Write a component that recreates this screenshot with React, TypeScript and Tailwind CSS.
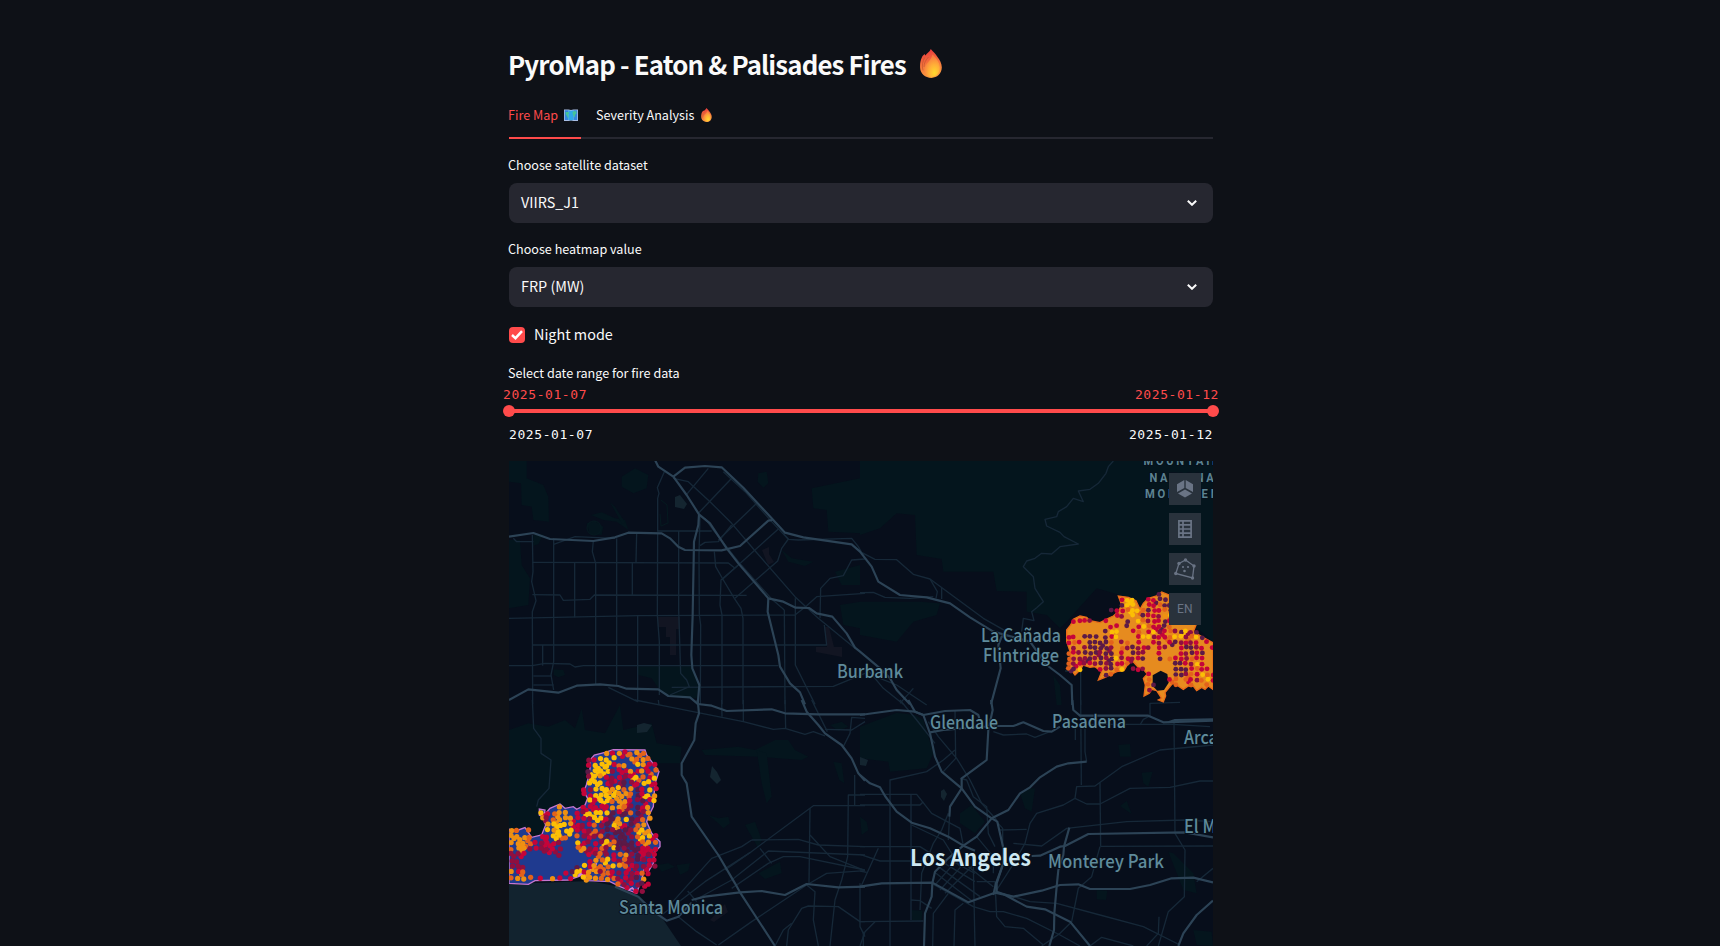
import React from "react";

const sans = "font-['Noto_Sans_CJK_SC',sans-serif]";

function Flame({ className, id }: { className: string; id: string }) {
  return (
    <svg viewBox="0 0 22 29" className={className}>
      <defs>
        <linearGradient id={id + "a"} x1="0.4" y1="0" x2="0.6" y2="1">
          <stop offset="0" stopColor="#e8383d" />
          <stop offset="0.45" stopColor="#f5703c" />
          <stop offset="1" stopColor="#fba040" />
        </linearGradient>
        <radialGradient id={id + "b"} cx="0.65" cy="0.82" r="0.75">
          <stop offset="0" stopColor="#ffd92e" />
          <stop offset="0.5" stopColor="#ffae38" />
          <stop offset="1" stopColor="#f97a40" />
        </radialGradient>
      </defs>
      <path d="M10.800 0C13 2.600 15.600 5 17.500 8 19.800 11.200 21.900 14.500 21.800 18.600 21.600 25 17 28.900 11.500 28.900 5 28.900.4 24.800.1 18.800-.1 15 .4 11.500 1.600 9c.7-1.600 1.500-2.800 3-4l.8 1.400C6.600 4.500 9.800 3 10.800 0Z" fill={`url(#${id}a)`} />
      <path d="M12.500 5.500c3.500 3.500 7.500 8 7.300 13.500-.2 5.400-3.800 8.900-8.300 8.900-4.600 0-7.300-3.400-7-7.600.3-5.500 6.500-8 8-14.800Z" fill={`url(#${id}b)`} />
      <path d="M4.600 8.500c-2 4-3 8-1.600 13M8.500 8c-2.800 3-4.500 6-4.500 10" fill="none" stroke="#b8512f" strokeWidth="0.9" opacity="0.65" />
    </svg>
  );
}

function MapEmoji() {
  return (
    <svg viewBox="0 0 14 12" className="h-3 w-3.5">
      <path d="M0 .5h4.500l2.500.5 2.500-.5H14V12H9.500L7 11.500 4.500 12H0Z" fill="#a9bfe6" />
      <path d="M.8 1.200h3.700V11H.8zM9.500 1.200h3.700V11H9.500z" fill="#3487dc" />
      <path d="M4.500 1.200 7 1.700v9.600l-2.500-.4zM9.500 1.200 7 1.700v9.600l2.500-.4z" fill="#2fa8e8" />
      <path d="M1.500 3h3l.8 1.500L4 5.500 4.700 7.500 4 9.500 3 7 1.800 5.500zM8.500 3l1.500-1 2.500.5-.3 2.500-1.200.8V8.500L9.800 7.500 8.700 5z" fill="#45c49a" />
    </svg>
  );
}

function Select({ label, value }: { label: string; value: string }) {
  return (
    <div className="flex flex-col">
      <div className="-mt-px -ml-px flex h-[29px] items-start text-[12.6px] leading-[21px]">{label}</div>
      <div className="flex h-10 items-center justify-between rounded-lg bg-[#262730] pr-4 pl-3 text-[14.4px]">
        <span className="pb-0.5 leading-6">{value}</span>
        <svg viewBox="0 0 10 6" className="h-1.5 w-2.5">
          <path d="M.8.8 5 4.800 9.200.8" fill="none" stroke="#fafafa" strokeWidth="2" />
        </svg>
      </div>
    </div>
  );
}

type Lines = string[];

const majorNW: Lines = [
  "12,245 85,234 135,252 265,258 330,247 370,233 470,235 495,250 520,275 540,285 650,286 705,273 790,197 803,195",
  "450,15 460,35 505,65 545,120 582,178 615,205 665,280 700,325 790,430 835,440 872,458 912,459 935,475 982,485 1025,535 1050,578 1065,590 1125,640 1155,670 1175,705 1215,748",
  "505,65 540,38 600,33 650,37 715,98 800,190 840,233 895,247 1040,268 1065,290 1100,335 1120,380 1185,420 1265,427 1335,445 1395,487 1465,530 1575,560 1625,630 1665,660 1700,690 1702,750",
  "582,178 580,210 567,260 563,480 559,600 562,640 583,690 578,748",
  "790,430 788,470 820,600 825,635 855,685 885,712 900,748",
  "12,735 70,703 160,713 215,692 285,688 340,693 365,701 460,703 490,723 555,727 580,748",
];
const minorNW: Lines = [
  "82,240 84,350 80,380 93,437 82,470 83,748",
  "146,250 146,620 138,660 146,705",
  "209,322 209,487",
  "265,258 262,290 272,325 272,690",
  "335,250 335,690",
  "395,235 393,322",
  "382,322 382,420",
  "398,480 398,740 310,697",
  "458,230 458,130 462,115 457,98 478,50",
  "458,235 457,480 463,560 463,720",
  "521,228 521,465 527,655 545,675 553,695 495,720",
  "585,180 582,300 583,480 587,510 586,748",
  "628,290 632,335 655,375 688,430 708,460 714,490 714,748",
  "700,330 648,375 645,450 651,480 651,748",
  "838,465 840,748",
  "871,430 871,630 930,748",
  "113,570 113,632",
  "82,322 670,324 690,340",
  "82,419 165,420 175,436 255,433 268,420 725,421",
  "12,490 400,482 870,480 905,452 935,425 1080,415",
  "82,570 965,570 958,510",
  "12,632 82,632 120,625 195,627 210,636 235,632 820,632",
  "500,697 985,694 1080,655",
  "85,663 140,663",
  "85,690 146,690",
  "25,250 35,260 85,260",
  "146,268 210,245 330,250",
  "505,70 550,80 615,140 680,205 748,285 870,425 940,490 1050,580",
  "545,118 610,40",
  "580,175 680,70",
  "640,255 755,145",
  "650,375 820,222",
  "690,430 818,318 830,280 850,252 835,235",
  "585,272 600,262 640,260 680,210",
  "600,190 625,225 700,320 800,432 838,465",
  "655,50 720,110 800,200 850,253 880,255 1040,250 1060,275 1080,310",
  "945,490 947,400 975,370 1015,362 1040,315 1080,312",
  "458,228 620,228",
];
const minorNE: Lines = [
  "760,18 745,35 738,55 715,85 690,103 655,108 670,140 640,130 620,155 595,170 590,185 555,193 560,213 600,232 612,245 655,267 600,275 575,297 545,295 525,310 500,318 490,335 505,350 520,365 525,400 550,440 530,458 515,470 522,497 490,490 485,530",
  "0,413 40,412 75,427 150,430 220,425",
  "0,290 45,313 110,314 160,358 210,372 370,490 440,530",
  "210,372 232,410 228,430",
  "245,398 245,432",
  "615,648 662,648 662,750",
  "20,640 70,700 130,748",
  "160,700 120,745",
  "60,670 110,690 200,750",
];
const majorSW: Lines = [
  "578,0 582,40 572,70 568,120 530,190 530,225 545,250 560,350 640,465 690,550 705,577 810,738",
  "890,0 905,35 940,75 960,100 1010,135 1040,175 1060,220 1080,242",
  "578,12 620,17 665,33 800,28 840,40 940,43 1080,43",
  "330,560 400,590 440,630 485,662 520,650 560,608",
  "560,600 600,590 705,577 770,573 840,585 905,552 1000,562 1080,560",
];
const minorSW: Lines = [
  "82,0 86,85 108,115 108,160 138,180 132,265 100,300 95,320",
  "390,0 500,22 715,65 805,88 840,85 900,103 925,95 960,108",
  "460,0 462,15",
  "840,0 842,85",
  "650,0 651,50",
  "715,0 715,65",
  "920,0 967,95",
  "1080,55 1040,52 1035,100 1015,140",
  "960,88 1040,90 1080,65",
  "1049,225 1049,315",
  "1080,285 1030,285 1028,470 1010,540 990,600 975,738",
  "1080,317 925,317 735,458 660,510",
  "915,325 912,550",
  "680,565 790,490 835,470 885,470 1080,510",
  "740,420 880,418 940,435 1080,440",
  "740,420 710,440 620,475 490,620",
  "570,600 680,540 790,453 1080,465",
  "735,458 600,545 470,645",
  "765,445 800,490",
  "548,573 575,605",
  "915,405 975,470 1080,512",
  "1080,512 965,520 905,555 740,665 640,735",
  "520,650 575,695 635,735",
  "905,555 930,575 925,660 940,738",
  "845,738 850,690 890,625 910,618 1000,620 1065,665 1080,665",
  "1065,550 1065,680 1080,710",
  "860,670 835,690 810,738",
];
const majorSE: Lines = [
  "145,0 165,35 190,45 210,100 225,170 245,215 305,265 345,320 395,355 412,365 430,445 430,490 410,550 410,578",
  "0,225 30,250 60,262 75,288 110,335 155,368 210,385 265,410 310,437 345,452",
  "637,0 640,30 660,47 865,47 910,67 1059,62",
  "0,45 110,30 165,35 190,45 255,33 330,30 355,45 365,80",
  "210,97 250,90 400,78 460,78 490,67 550,93 575,95 600,80",
  "393,0 398,30 385,90 380,180 305,235 305,265 270,320 268,350",
  "680,185 625,190 590,200 540,232 510,262 480,280 445,330 395,355 350,410 310,437 265,475 225,515 217,550 215,590 195,640 192,738",
  "0,560 65,550 217,548 325,607 405,578 460,590 545,572 600,555 655,553 690,567 810,567 870,555 935,535 1000,533 1059,547",
  "515,468 540,467 600,440 615,438 685,402 975,397 1059,412",
  "628,383 612,440 610,465 595,510 590,560 583,640 582,690 568,738",
  "410,575 430,582 500,620 555,628 630,665 690,738",
  "430,490 408,550 400,585",
  "955,738 970,700 1010,645 1059,602",
  "925,67 945,60 1059,58",
];
const minorSE: Lines = [
  "90,738 90,240 200,215 250,180 285,150",
  "285,30 287,175 250,215",
  "205,65 235,110 290,175 330,240 365,310 410,360",
  "0,283 170,283 215,340 300,385 310,437",
  "153,285 153,660",
  "0,315 180,315 190,305",
  "0,440 180,440 260,490",
  "0,463 60,483 200,483",
  "155,375 250,420 300,500",
  "270,320 265,420",
  "662,0 664,255",
  "675,70 675,155 680,185",
  "646,80 646,120",
  "720,248 722,440",
  "942,60 945,400 975,450 973,590 925,635 895,738",
  "460,430 545,438 620,385 800,365 975,360 1059,365",
  "420,390 500,388",
  "645,295 610,315 530,340 510,370 495,430 455,500 410,570",
  "645,295 650,260 705,258 785,200 900,150 1059,135",
  "645,295 680,312 720,312 810,265 930,262 1020,243 1059,243",
  "722,439 1059,438",
  "400,95 430,105 500,102 525,112 570,95",
  "840,75 850,58 870,48 870,10 960,7",
  "670,73 940,73 1050,80",
  "153,600 180,602 215,625",
  "215,550 340,620 390,635 430,635 500,655 600,705 660,738",
  "340,500 345,738",
  "218,738 220,640 265,580",
  "282,738 285,630 310,610",
  "0,665 190,663",
  "0,738 15,695 45,665",
  "10,695 10,738",
  "430,580 510,605 590,610 720,645 850,680 960,735",
  "545,738 600,700 635,665 655,565 695,530 720,440",
  "350,545 405,545 410,650 435,680 490,685 550,735",
  "690,738 725,712 820,738",
  "860,738 895,700 897,650",
  "1010,545 1059,505",
  "5,555 55,445",
  "0,513 20,517",
  "222,515 345,610",
  "235,500 360,590",
  "250,488 345,545",
  "270,480 345,520",
  "290,472 400,560",
  "240,570 330,470",
  "255,580 345,490",
  "225,555 300,470",
  "120,0 170,60 225,130",
  "300,235 320,240 340,290 380,320 385,400 405,440",
  "410,365 428,385 428,440",
  "350,410 400,470 400,520",
  "265,340 245,390 220,430 185,520 180,630",
];

const parksNW: Lines = [
  "12,18 65,18 65,70 115,90 130,125 132,200 85,195 80,155 50,150 48,85 12,80",
  "350,65 390,40 430,60 425,100 385,115 350,95",
  "12,255 45,255 50,330 75,370 70,450 12,460",
  "258,180 290,172 330,190 360,195 370,225 335,200 295,195",
  "245,205 270,198 295,215 290,240 255,238",
  "315,142 330,155 362,205 350,205",
  "395,634 562,634 582,690 575,730 490,722 460,700 440,670 400,660",
  "830,285 860,310 925,320 900,333 850,320",
  "760,55 785,50 790,85 775,98 758,80",
  "85,240 115,238 100,268 85,272",
  "146,643 175,645 180,660 160,667 146,660",
  "920,100 1065,70 1065,235 970,230 965,165 925,160",
  "990,350 1065,330 1065,390 1010,390",
  "1005,450 1065,440 1065,520 1015,510",
];
const parksNE: Lines = [
  "0,18 1059,18 1059,560 1000,510 780,420 710,400 620,500 600,520 560,480 500,470 500,410 410,408 400,350 250,350 245,312 170,300 165,180 110,175 60,220 0,240",
  "0,440 60,440 180,440 240,445 230,480 160,500 110,560 0,540",
  "580,660 600,690 605,750 590,750",
];
const parksSW: Lines = [
  "12,90 70,70 130,80 180,60 210,85 230,25 240,90 300,100 345,15 355,90 440,70 455,130 530,140 525,190 460,190 440,300 250,360 80,420 12,390",
  "590,150 700,140 750,150 810,120 850,120 870,150 910,170 890,180 760,170 600,165",
  "755,150 785,160 800,290 785,310 770,250",
  "610,345 640,355 670,350 675,370 655,385 640,370",
  "455,495 490,490 510,500 470,515",
  "515,495 555,490 550,512 525,525",
  "720,375 750,365 770,420 760,445 740,410",
  "760,520 825,485 830,520 780,537",
  "985,185 1010,190 1018,250 1003,240",
  "975,75 1010,65 1030,80 1000,92",
];
const parksSE: Lines = [
  "0,80 110,38 165,45 190,60 220,160 200,205 90,215 85,185 0,175",
  "480,280 505,265 525,265 515,335 495,325",
  "775,135 810,132 813,170 780,170",
  "845,218 878,215 865,260 850,250",
  "780,318 800,303 815,342",
  "925,455 940,460 1000,520 1010,580 970,570",
  "710,570 742,572 738,600 710,598",
  "155,630 187,632 185,660 157,662",
  "300,340 335,315 375,365 345,400 300,370",
  "1000,690 1055,695 1059,738 1010,735",
  "0,350 20,365 25,390 5,405",
];

const hues: Record<string, string> = {
  Y: "#fcbf05",
  O: "#ee9012",
  E: "#e3621b",
  R: "#c50439",
  M: "#8f0f3f",
  P: "#5b1a47",
};

const palisades = [
  "................OROREOE..",
  ".............MRYYY..OEOE.",
  ".............RYYYREO.YORR",
  ".............PYYYMRRORORE",
  ".............MYORMRMRYERY",
  ".............YYYRMMPMRYYR",
  "............RMYYYOYEOPRYR",
  "............RRYYYYOOEPRYO",
  ".............YRYYEOORMPRY",
  "........O...RRRRROOEMPRO.",
  ".....YREOO.RMYYYYPRPEPMO.",
  ".....OMEOOORRMYYRPOYPMEO.",
  "......OYYYORMREMPYORPEO..",
  "OE.E..YOYYYRRMEMPMPPMEYO.",
  "OOOE.RRYYE.EMRMEPMPPMEYYR",
  "OOOERMRRM..YRMRMYEPPPREOE",
  "EOOMRMMRM..EOMREMYPMPPRRR",
  "MMR.....M....RMEMREOMPRMR",
  "MM...........ROEYRMEMPMRR",
  "MMM........PYROEEYOERMMRM",
  "ORE......RPYROOMERMRMRER.",
  "EOOE.R.OR.R.YOOEOEMRMPO..",
  "..................EMRMPR.",
  ".....................RM..",
];

const eaton = [
  ".................P..........",
  "..........RYY..RRPP.........",
  "..........PYY..RREPP........",
  "........PRREYYEPRREPP.......",
  ".........RM.Y.PRRMOY........",
  ".RRRM..R...P.YEMRRPR........",
  "........RR.P.RYERRPE........",
  ".......PYY..RE.RYMREMPYMP...",
  "RR.PPP.PRY...RYYMRREYYMEYP..",
  "RER.PPPPE.ME.R..RM.RPMRMR.R.",
  ".M.MPPPPM.EMPMRM.RM..RPPMR.R",
  "ERMPPPMPPOR.PMM..R...RMPRP..",
  "EMMMPMPMPYMRMRP..P.ERRMERR..",
  "EMRMRMPMPRRE........PPRMYR..",
  "EPY...RMPEY.MRM.....PPPRERR.",
  ".......PE......R....PPMERYER",
  "...............E...RE.ERMEYR",
  "...............EP...E..E..E.",
  "...............M............",
];

function noise(n: number) {
  const v = Math.sin(n * 127.1 + 11.7) * 43758.5453;
  return v - Math.floor(v);
}

interface DetectionsProps {
  rows: string[];
  x: number;
  y: number;
  step: number;
  radius: number;
  jitter: number;
  extra: number;
}

function Detections({ rows, x, y, step, radius, jitter, extra }: DetectionsProps) {
  const under: React.ReactElement[] = [];
  const dots: React.ReactElement[] = [];
  rows.forEach((row, j) =>
    row.split("").forEach((c, i) => {
      if (c === ".") return;
      const n = j * 31 + i;
      const px = x + i * step + (noise(n) - 0.5) * jitter;
      const py = y + j * step + (noise(n + 900) - 0.5) * jitter;
      const next = row[i + 1];
      if (next && next !== "." && noise(n + 300) < extra) {
        const layer = noise(n + 500) < 0.5 ? under : dots;
        layer.push(<circle key={`e${n}`} cx={px + step / 2} cy={py + step / 2} r={radius} fill={hues[next]} />);
      }
      dots.push(<circle key={n} cx={px} cy={py} r={radius} fill={hues[c]} />);
    }),
  );
  return (
    <g>
      {under}
      {dots}
    </g>
  );
}

function Tile({ at, parks, minor, major }: { at: string; parks: Lines; minor: Lines; major: Lines }) {
  return (
    <g transform={`translate(${at}) scale(0.33333)`} fill="none" strokeLinejoin="round">
      {parks.map((p) => <polygon key={p} points={p} fill="#04151d" />)}
      {minor.map((p) => <polyline key={p} points={p} stroke="#162838" strokeWidth="4" />)}
      {major.map((p) => <polyline key={p} points={p} stroke="#2c4356" strokeWidth="6.5" />)}
    </g>
  );
}

function Place({ x, y, w, children, size = 18, fill = "#5f8b9b", weight = 500 }: { x: number; y: number; w: number; children: string; size?: number; fill?: string; weight?: number }) {
  return (
    <text x={x} y={y} textLength={w} lengthAdjust="spacingAndGlyphs" fontSize={size} fontWeight={weight} fill={fill} stroke="#07101c" strokeWidth="2" paintOrder="stroke">
      {children}
    </text>
  );
}

function FireMap() {
  return (
    <svg viewBox="509 461 704 485" className="block h-[485px] w-[704px] font-['Noto_Sans_CJK_SC',sans-serif]">
      <rect x="509" y="461" width="704" height="485" fill="#070e1b" />
      <Tile at="505 455" parks={parksNW} minor={[]} major={[]} />
      <Tile at="860 455" parks={parksNE} minor={[]} major={[]} />
      <Tile at="505 700" parks={parksSW} minor={[]} major={[]} />
      <Tile at="860 700" parks={parksSE} minor={[]} major={[]} />
      <path d="M509 884 590 881 620 887 637 895 660 915 681 946H509Z" fill="#12232f" />
      <g fill="#121522">
        <path d="M658 617h22v12h-4v26h-6v-18h-4v-10h-8zM816 647h11l-3-20h5l5 20h8v10l-26-5zM762 550l7-3v7l5 8-6 3z" />
        <path d="M710 920l15-16 3 8-14 10z" />
      </g>
      <g fill="#142530">
        <path d="M675 497l5-2 7 9-3 5-9-2zM637 725l7-2 8 2-5 7-10 1zM712 766l5 6 4 8-4 4-7-7zM941 791l3-2 3 5-3 7-3-4zM860 757l8 3-2 6-6-1z" />
      </g>
      <g fill="none" stroke="#051a20">
        <circle cx="594" cy="528" r="7" />
        <path d="M661 500l6 5 1 18-7 3-1-12" />
      </g>
      <Tile at="505 455" parks={[]} minor={minorNW} major={[]} />
      <Tile at="860 455" parks={[]} minor={minorNE} major={[]} />
      <Tile at="505 700" parks={[]} minor={minorSW} major={majorSW} />
      <Tile at="860 700" parks={[]} minor={minorSE} major={majorSE} />
      <Tile at="505 455" parks={[]} minor={[]} major={majorNW} />
      <Tile at="860 455" parks={[]} minor={[]} major={["440,542 425,545 415,570 422,640 393,748"]} />

      <g transform="translate(505 700) scale(0.33333)">
        <polygon
          points="12,387 24,392 40,390 60,383 72,400 80,412 110,405 122,375 112,350 103,345 103,327 120,330 118,345 135,325 165,312 180,325 205,320 215,328 240,315 248,295 236,275 244,255 248,240 255,205 255,180 268,165 300,157 325,149 420,150 425,165 440,185 462,215 452,245 448,275 445,320 430,350 425,365 440,400 465,425 465,440 450,455 445,490 428,518 418,505 410,540 400,565 395,580 370,570 345,560 315,545 250,542 232,525 220,530 190,540 90,542 70,553 12,550"
          fill="#1f3a8f"
          stroke="#c676d0"
          strokeWidth="4"
        />
        <path d="M218 505l10 12-8 10 18-8 4 12 12-20 14-8M275 490l-12 18M370 570l12-6 14 16" fill="none" stroke="#d583da" strokeWidth="5" />
        <Detections rows={palisades} x={20} y={159} step={17.9} radius={7.9} jitter={8} extra={0.5} />
      </g>

      <g transform="translate(1050 570) scale(0.33333)">
        <path
          d="M50 180L62 165 70 148 90 138 110 142 120 152 150 158 175 145 190 138 205 125 215 105 205 78 235 82 258 92 270 118 280 100 295 85 320 78 335 66 357 75V160H440L430 185 455 200 489 218V358L475 348 465 358 455 352 440 362 430 348 415 348 400 358 380 345 368 340 358 352 345 368 347 378 340 396 325 390 335 385 320 362 305 358 298 370 282 378 286 345 280 325 292 312 280 298 265 292 245 270 232 285 222 302 200 305 180 315 165 322 145 330 155 305 135 290 120 292 100 285 90 300 75 315 60 295 62 250 50 215Z"
          fill="#e68b1f"
          stroke="#ea6b1a"
          strokeWidth="4"
        />
        <path d="M308 316l24-14 20 10 4 26-14 22-20 2-14-14Z" fill="#070e1b" />
        <Detections rows={eaton} x={56} y={73} step={16} radius={7.3} jitter={5} extra={0.12} />
      </g>

      <Place x={837} y={678} w={66}>Burbank</Place>
      <Place x={981} y={641.5} w={80}>La Cañada</Place>
      <Place x={983} y={661.5} w={76}>Flintridge</Place>
      <Place x={930} y={728.5} w={68}>Glendale</Place>
      <Place x={1052} y={727.5} w={74}>Pasadena</Place>
      <Place x={1184} y={744} w={58}>Arcadia</Place>
      <Place x={1184} y={833} w={68}>El Monte</Place>
      <Place x={1048} y={867.5} w={116}>Monterey Park</Place>
      <Place x={619} y={914} w={104}>Santa Monica</Place>
      <Place x={910} y={866} w={121} size={22.5} fill="#cde8f2" weight={700}>Los Angeles</Place>
      <g className="font-['Roboto',sans-serif]">
        <Place x={1143.5} y={465} w={86} size={13.5} weight={700} fill="#5c8391">M O U N T A I N S</Place>
        <Place x={1149.5} y={481.5} w={73} size={13.5} weight={700} fill="#5c8391">N A T I O N A L</Place>
        <Place x={1145} y={498} w={83} size={13.5} weight={700} fill="#5c8391">M O N U M E N T</Place>
      </g>
    </svg>
  );
}

function MapButton({ children }: { children: React.ReactNode }) {
  return <button className="flex h-8 w-8 items-center justify-center bg-[#29323c] text-[#6a7485]">{children}</button>;
}

const dateText = "font-['DejaVu_Sans_Mono',monospace] text-[13px] tracking-[0.58px]";

export default function App() {
  return (
    <div className={`flex h-[946px] w-full justify-center overflow-hidden bg-[#0e1117] text-[#fafafa] ${sans}`}>
      <main className="ml-[2px] flex w-[704px] flex-col pt-[41px]">
        <h1 className="flex h-11 items-center gap-[14px] text-[25.8px] leading-[43px] font-bold whitespace-nowrap">
          <span className="-ml-px tracking-[-0.85px]">PyroMap - Eaton &amp; Palisades Fires</span>
          <Flame id="f1" className="h-[29px] w-[22px]" />
        </h1>

        <nav className="mt-[10px] flex h-11 items-stretch gap-4 border-b-2 border-[#262730] text-[12.6px]">
          <div className="-mb-0.5 flex w-[72px] items-center gap-[6px] border-b-2 border-[#ff4b4b] pb-[2px] whitespace-nowrap text-[#ff4b4b]">
            <span className="-ml-px">Fire Map</span>
            <MapEmoji />
          </div>
          <div className="-ml-px flex items-center gap-[7px] pb-[2px] whitespace-nowrap">
            <span>Severity Analysis</span>
            <Flame id="f2" className="h-[14px] w-[11px]" />
          </div>
        </nav>

        <div className="mt-4 flex flex-col gap-4">
          <Select label="Choose satellite dataset" value="VIIRS_J1" />
          <Select label="Choose heatmap value" value="FRP (MW)" />
        </div>

        <label className="mt-4 flex h-6 items-center gap-[9px] text-[14.4px] leading-6">
          <span className="flex h-4 w-4 items-center justify-center rounded bg-[#ff4b4b]">
            <svg viewBox="0 0 12 10" className="h-2.5 w-3">
              <path d="M1 5 4.500 8.200 11 1.200" fill="none" stroke="#fff" strokeWidth="2.500" />
            </svg>
          </span>
          <span className="pb-0.5">Night mode</span>
        </label>

        <div className="mt-[15px] -ml-px h-[23px] text-[12.6px] leading-[21px]">Select date range for fire data</div>
        <div className={`-mx-1.5 flex h-5 items-center justify-between text-[#ff4b4b] ${dateText}`}>
          <span>2025-01-07</span>
          <span>2025-01-12</span>
        </div>
        <div className="-mx-1.5 flex h-3 items-center">
          <div className="h-3 w-3 rounded-full bg-[#ff4b4b]" />
          <div className="-mx-1.5 h-1 flex-1 bg-[#ff4b4b]" />
          <div className="h-3 w-3 rounded-full bg-[#ff4b4b]" />
        </div>
        <div className={`mt-2 flex h-5 items-center justify-between ${dateText}`}>
          <span>2025-01-07</span>
          <span>2025-01-12</span>
        </div>

        <section className="relative mt-4 h-[485px] w-[704px] shrink-0 overflow-hidden">
          <FireMap />
          <div className="absolute top-3 right-3 flex flex-col gap-2">
            <MapButton>
              <svg viewBox="0 0 16 18" className="h-[18px] w-4" fill="currentColor">
                <path d="M7.300 0v8L0 12V4.200zM8.700 0v8L16 12V4.200zM8 9.500l7 4L8 17.500l-7-4z" />
              </svg>
            </MapButton>
            <MapButton>
              <svg viewBox="0 0 14 18" className="h-[18px] w-3.5" fill="none" stroke="currentColor" strokeWidth="1.700">
                <path d="M.9.9h12.200v16.200H.9zM5 1v16M1 4.900h12M1 9h12M1 13.100h12" />
              </svg>
            </MapButton>
            <MapButton>
              <svg viewBox="0 0 22 22" className="h-[22px] w-[22px]" fill="none" stroke="currentColor" strokeWidth="1.300">
                <path d="M5 5.500 11.500 2 20 8 18.500 20 1.800 15.500Z" />
                <g fill="currentColor" stroke="none">
                  <circle cx="5" cy="5.500" r="1.700" />
                  <circle cx="11.500" cy="2" r="1.700" />
                  <circle cx="20" cy="8" r="1.700" />
                  <circle cx="18.500" cy="20" r="1.700" />
                  <circle cx="1.800" cy="15.500" r="1.700" />
                  <circle cx="9" cy="9" r="1.100" />
                  <circle cx="14" cy="9" r="1.100" />
                  <circle cx="10.500" cy="13" r="1.300" />
                </g>
              </svg>
            </MapButton>
            <MapButton>
              <span className="font-['Roboto',sans-serif] text-xs leading-4 tracking-[0.3px]">EN</span>
            </MapButton>
          </div>
        </section>
      </main>
    </div>
  );
}
